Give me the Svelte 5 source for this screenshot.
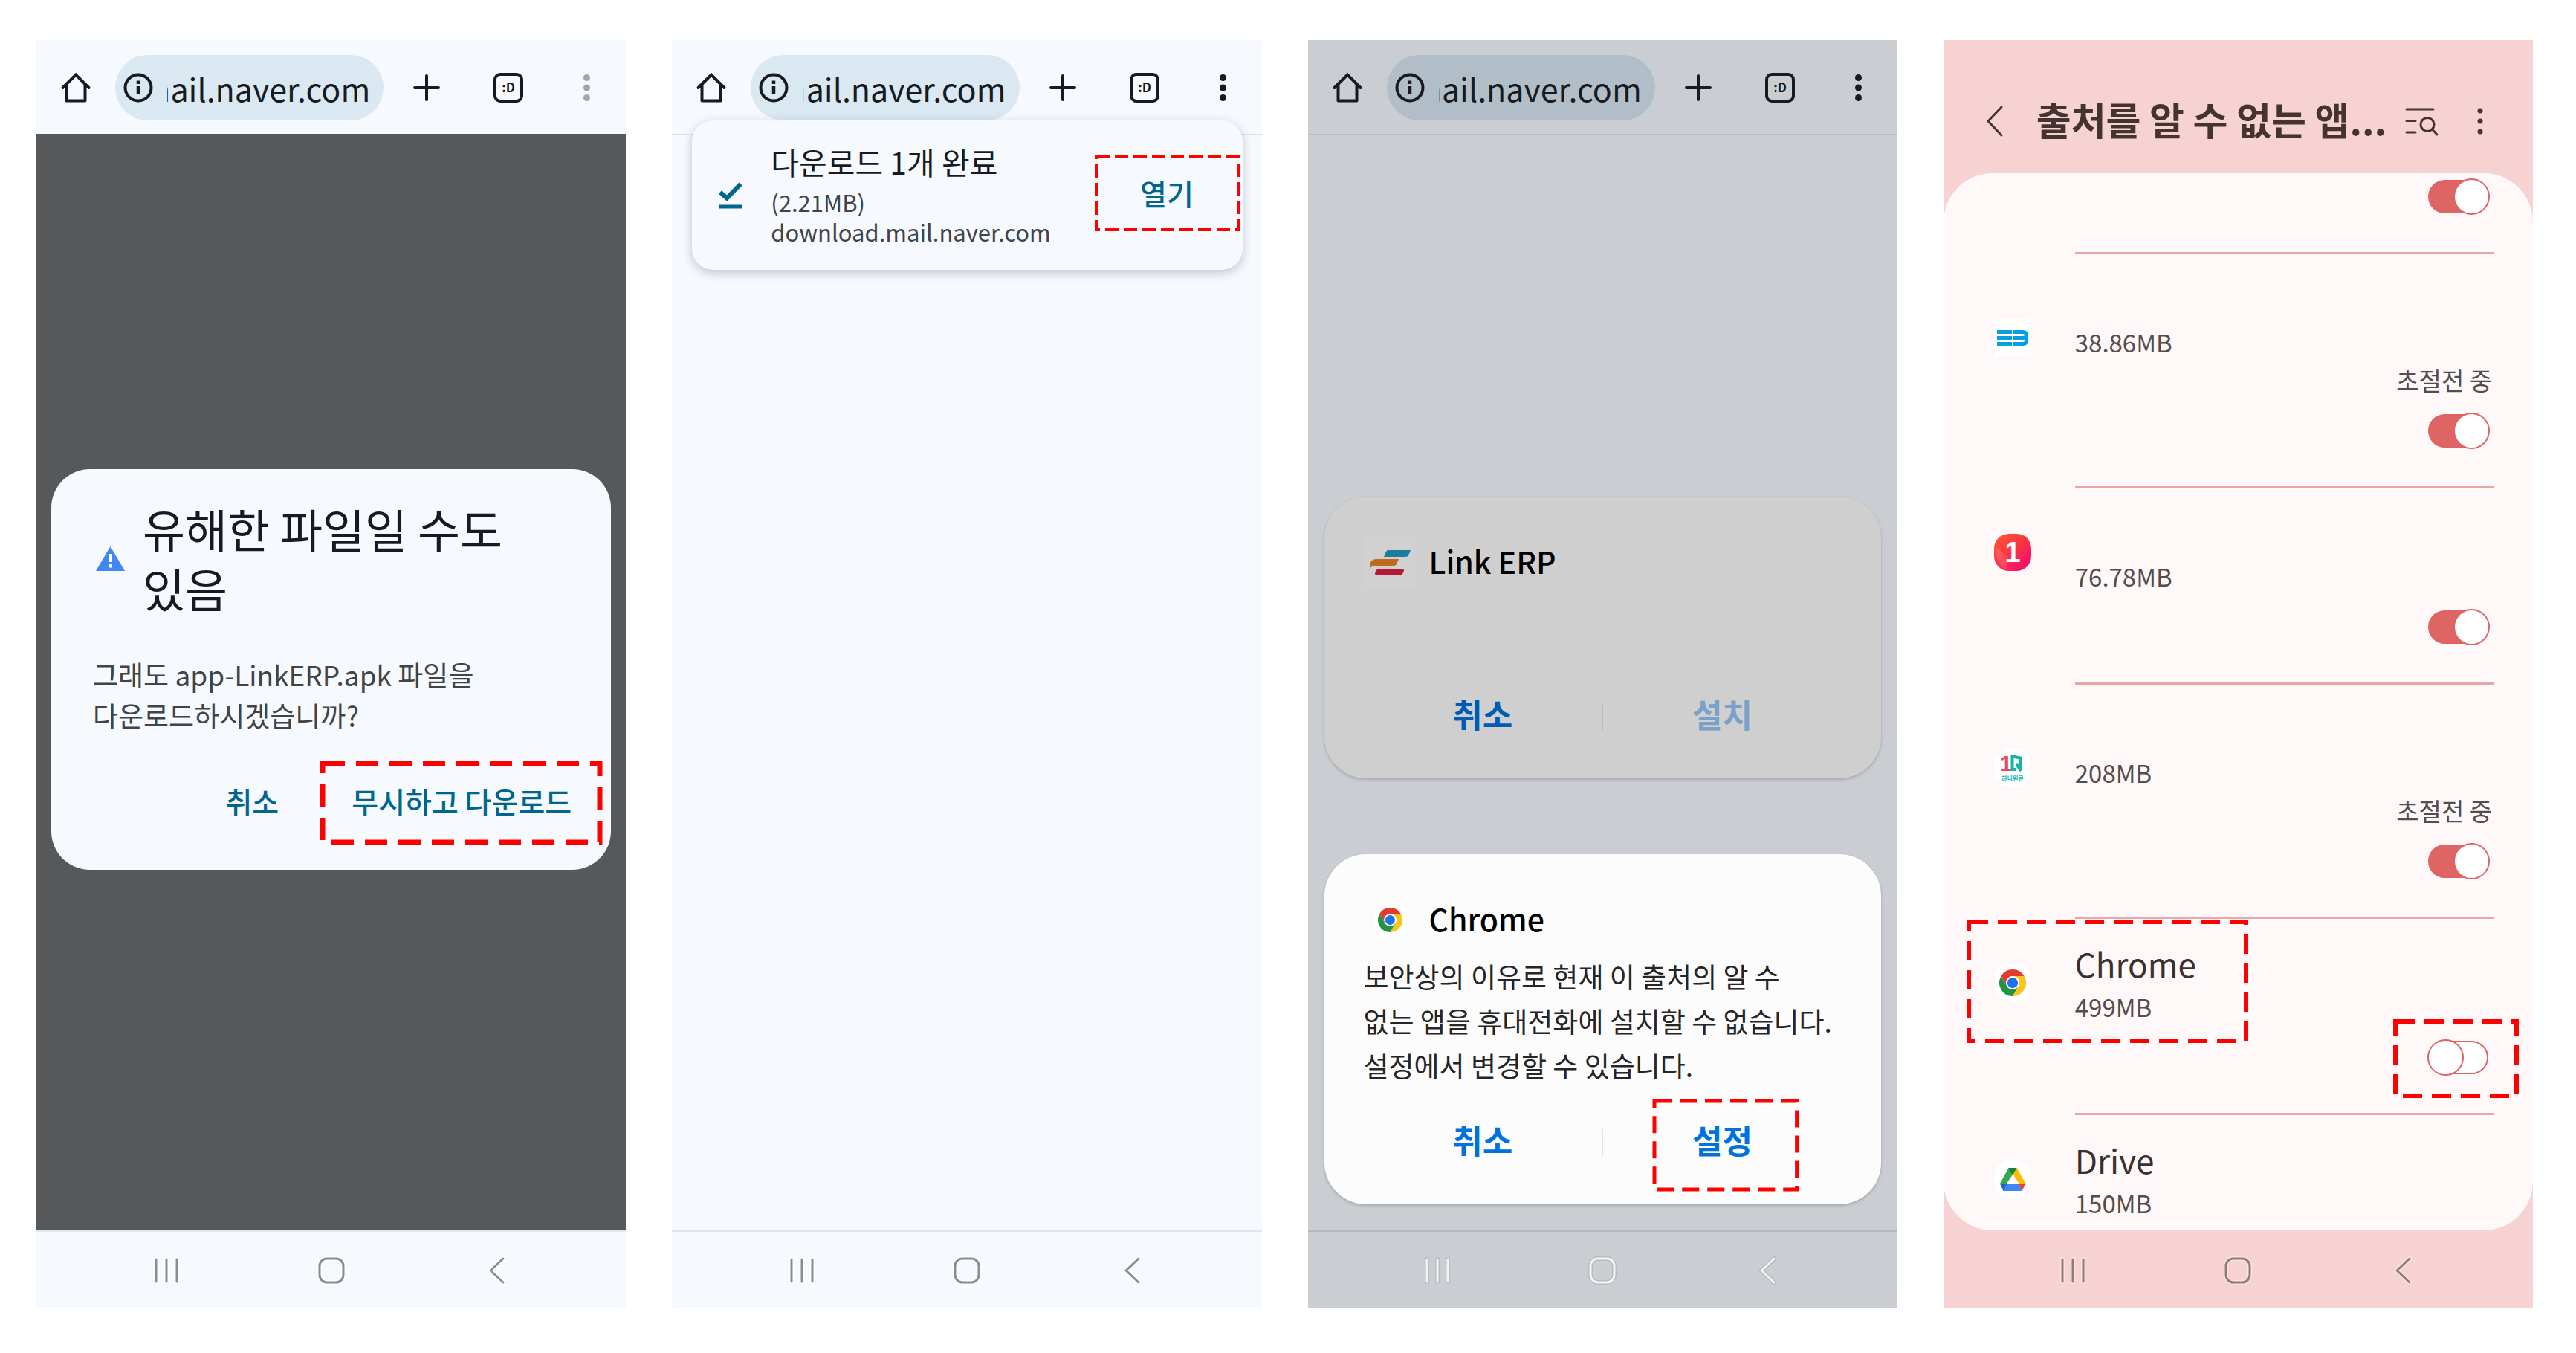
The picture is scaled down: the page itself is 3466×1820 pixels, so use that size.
<script lang="ts">
  const apps = [
    { id: 'first', name: '', size: '', icon: '', sleeping: false, allowed: true, partial: 'top' },
    { id: 'eb', name: '', size: '38.86MB', icon: 'eb', sleeping: true, allowed: true, partial: '' },
    { id: 'eleven', name: '', size: '76.78MB', icon: 'eleven', sleeping: false, allowed: true, partial: '' },
    { id: 'oneq', name: '', size: '208MB', icon: 'oneq', sleeping: true, allowed: true, partial: '' },
    { id: 'chrome', name: 'Chrome', size: '499MB', icon: 'chrome', sleeping: false, allowed: false, partial: '' },
    { id: 'drive', name: 'Drive', size: '150MB', icon: 'drive', sleeping: false, allowed: false, partial: 'bottom' },
  ];
</script>

{#snippet chromeLogo()}
  <circle cx="24" cy="24" r="12" fill="#fff" />
  <path fill="#e33b2e" d="M24,12H44.7812a23.9939,23.9939,0,0,0-41.5639.0029L13.6079,30l.0093-.0024A11.9852,11.9852,0,0,1,24,12Z" />
  <path fill="#fcc31e" d="M34.3913,30.0029,24.0007,48A23.994,23.994,0,0,0,44.78,12.0031H23.9989l-.0025.0093A11.985,11.985,0,0,1,34.3913,30.0029Z" />
  <path fill="#229342" d="M13.6086,30.0031,3.218,12.006A23.994,23.994,0,0,0,24.0025,48L34.3931,30.0029l-.0067-.0068a11.9852,11.9852,0,0,1-20.7778.007Z" />
  <circle cx="24" cy="24" r="9.5" fill="#1a73e8" />
{/snippet}

{#snippet mark(kind: string)}
  <svg class="mark {kind}" aria-hidden="true"><rect /></svg>
{/snippet}

{#snippet toolbar(id: string)}
  <header class="toolbar">
    <button class="icon-btn" aria-label="홈">
      <svg width="40" height="40" viewBox="0 0 40 40" fill="none" stroke="currentColor" stroke-width="4" stroke-linejoin="round" stroke-linecap="round">
        <path d="M2.500 20 L20 2.500 L37.500 20" stroke-linejoin="miter" />
        <path d="M7.500 16 V37.500 H32.500 V16" />
      </svg>
    </button>
    <div class="address">
      <svg width="40" height="40" viewBox="0 0 40 40" fill="none" stroke="currentColor" aria-hidden="true">
        <circle cx="20" cy="20" r="17.500" stroke-width="4" />
        <path d="M20 18 V29" stroke-width="4.500" />
        <path d="M20 10.500 V15" stroke-width="4.500" />
      </svg>
      <input id="url-{id}" aria-label="주소" value="mail.naver.com" dir="rtl" readonly />
    </div>
    <div class="tools">
      <button class="icon-btn" aria-label="새 탭">
        <svg width="40" height="40" viewBox="0 0 40 40" fill="none" stroke="currentColor" stroke-width="4" stroke-linecap="round"><path d="M4 20 H36 M20 4 V36" /></svg>
      </button>
      <button class="icon-btn" aria-label="탭">
        <svg width="40" height="40" viewBox="0 0 40 40">
          <rect x="2" y="2" width="36" height="36" rx="7" fill="none" stroke="currentColor" stroke-width="4" />
          <text x="20" y="26" class="tab-face">:D</text>
        </svg>
      </button>
      <button class="icon-btn more" aria-label="더보기">
        <svg width="31" height="40" viewBox="0 0 31 40" fill="currentColor">
          <circle cx="15.500" cy="6.500" r="4.500" /><circle cx="15.500" cy="20" r="4.500" /><circle cx="15.500" cy="33.500" r="4.500" />
        </svg>
      </button>
    </div>
  </header>
{/snippet}

{#snippet navbar()}
  <nav class="navbar">
    <button class="icon-btn" aria-label="최근 앱">
      <svg width="44" height="44" viewBox="0 0 44 44">
        <path class="halo" d="M8 7 V37 M22 7 V37 M36 7 V37" />
        <path class="line" d="M8 7 V37 M22 7 V37 M36 7 V37" />
      </svg>
    </button>
    <button class="icon-btn" aria-label="홈 화면">
      <svg width="44" height="44" viewBox="0 0 44 44">
        <rect class="halo" x="6" y="6" width="32" height="32" rx="10" />
        <rect class="line" x="6" y="6" width="32" height="32" rx="10" />
      </svg>
    </button>
    <button class="icon-btn" aria-label="뒤로">
      <svg width="44" height="44" viewBox="0 0 44 44">
        <path class="halo" d="M31 6 L14 22 L31 38" />
        <path class="line" d="M31 6 L14 22 L31 38" />
      </svg>
    </button>
  </nav>
{/snippet}

<main class="board">
  <section class="phone warning">
    {@render toolbar('warning')}
    <div class="screen">
      <div class="dialog" role="dialog" aria-labelledby="harm-title">
        <div class="dialog-head">
          <svg width="47" height="47" viewBox="0 0 47 47" aria-hidden="true">
            <path d="M23.500 7 L43 40 H4 Z" fill="#4285f4" />
            <path d="M23.500 17 V28 M23.500 31 V35.500" stroke="#fff" stroke-width="5" />
          </svg>
          <h2 id="harm-title">유해한 파일일 수도<br />있음</h2>
        </div>
        <p>그래도 app-LinkERP.apk 파일을<br />다운로드하시겠습니까?</p>
        <div class="dialog-actions">
          <button class="text-btn">취소</button>
          <button class="text-btn ignore">무시하고 다운로드{@render mark('m-ignore')}</button>
        </div>
      </div>
    </div>
    {@render navbar()}
  </section>

  <section class="phone done">
    {@render toolbar('done')}
    <div class="screen"></div>
    {@render navbar()}
    <div class="snack" role="status">
      <svg width="32" height="36" viewBox="0 0 32 36" fill="none" stroke="#00668b" aria-hidden="true">
        <path d="M2 13.500 L11 21.500 L29.500 2.500" stroke-width="6" />
        <path d="M0 33 H32" stroke-width="5" />
      </svg>
      <div class="snack-text">
        <strong>다운로드 1개 완료</strong>
        <span>(2.21MB)</span>
        <span>download.mail.naver.com</span>
      </div>
      <button class="text-btn open">열기{@render mark('m-open')}</button>
    </div>
  </section>

  <section class="phone install">
    {@render toolbar('install')}
    <div class="screen">
      <div class="card dim">
        <div class="card-head">
          <svg width="71" height="71" viewBox="0 0 71 71" aria-hidden="true">
            <rect width="71" height="71" fill="#d1d1d1" />
            <path fill="#1b7d9e" d="M33 19 H63 L60 26 Q59 28 56 28 H27 L30 21 Q31 19 33 19 Z" />
            <path fill="#bf6a1f" d="M16 31 H47 L44 38 Q43 40 40 40 H14 Q11 40 8 44 Q7 31 16 31 Z" />
            <path fill="#b31835" d="M20 44 H51 Q54 44 54 47 L51 53 H18 Q15 53 15 50 L17 46 Q18 44 20 44 Z" />
          </svg>
          <h2>Link ERP</h2>
        </div>
        <div class="card-gap"></div>
        <div class="card-actions">
          <button>취소</button>
          <i></i>
          <button disabled>설치</button>
        </div>
      </div>
      <div class="card">
        <div class="card-head">
          <svg width="71" height="71" viewBox="0 0 71 71" aria-hidden="true">
            <rect x="14" y="14" width="43" height="43" rx="16" fill="#fff" />
            <svg x="19" y="19" width="33" height="33" viewBox="0 0 48 48">{@render chromeLogo()}</svg>
          </svg>
          <h2>Chrome</h2>
        </div>
        <p>보안상의 이유로 현재 이 출처의 알 수<br />없는 앱을 휴대전화에 설치할 수 없습니다.<br />설정에서 변경할 수 있습니다.</p>
        <div class="card-actions">
          <button>취소</button>
          <i></i>
          <button>설정{@render mark('m-settings')}</button>
        </div>
      </div>
    </div>
    {@render navbar()}
  </section>

  <section class="phone sources">
    <header class="sources-head">
      <button class="icon-btn" aria-label="뒤로">
        <svg width="22" height="42" viewBox="0 0 22 42" fill="none" stroke="currentColor" stroke-width="3" stroke-linecap="round" stroke-linejoin="round"><path d="M20 2 L2 21 L20 40" /></svg>
      </button>
      <h1>출처를 알 수 없는 앱...</h1>
      <button class="icon-btn" aria-label="검색">
        <svg width="45" height="36" viewBox="0 0 45 36" fill="none" stroke="currentColor" stroke-width="3" stroke-linecap="round">
          <path d="M2 2 H38 M2 17.500 H14 M2 33 H14" />
          <circle cx="30" cy="22.500" r="9" /><path d="M36.500 29 L43 36" />
        </svg>
      </button>
      <button class="icon-btn" aria-label="더보기">
        <svg width="20" height="36" viewBox="0 0 20 36" fill="currentColor"><circle cx="10" cy="4" r="3.500" /><circle cx="10" cy="18" r="3.500" /><circle cx="10" cy="32" r="3.500" /></svg>
      </button>
    </header>
    <ul class="apps">
      {#each apps as app (app.id)}
        <li class={app.partial}>
          <div class="app-icon">
            {#if app.icon}
              <svg width="50" height="50" viewBox="0 0 50 50" aria-hidden="true">
                {#if app.icon === 'eb'}
                  <rect width="50" height="50" fill="#fff" />
                  <path d="M4 17.500 H24 M4 25.500 H24 M4 33.500 H24" stroke="#069fe0" stroke-width="5" />
                  <path d="M26 17.500 H39 Q43.500 17.500 43.500 21.500 Q43.500 25.500 39 25.500 H26 M26 33.500 H39 Q43.500 33.500 43.500 29.500 Q43.500 25.500 39 25.500" fill="none" stroke="#069fe0" stroke-width="5" />
                {:else if app.icon === 'eleven'}
                  <defs>
                    <linearGradient id="eleven-fill" x1="0" y1="0" x2="1" y2="1">
                      <stop offset="0" stop-color="#ff5a2d" /><stop offset=".5" stop-color="#fa3248" /><stop offset="1" stop-color="#f5007d" />
                    </linearGradient>
                  </defs>
                  <rect width="50" height="50" rx="20" fill="url(#eleven-fill)" />
                  <path d="M3 18 L17 30 V48 Q2 44 3 18 Z" fill="#fff" opacity=".12" />
                  <path d="M48 13 L31 22 V0 Q46 0 48 13 Z" fill="#ff3a2d" opacity=".3" />
                  <text x="25" y="38" class="eleven">1</text>
                {:else}
                  <rect x="1" width="48" height="50" rx="19" fill="#fff" />
                  {#if app.icon === 'oneq'}
                    <text x="16" y="29" class="oneq">1</text>
                    <path d="M24.500 9.500 L35 11.500 V28 M24.500 8 V27 H30 M30 20 L36.500 29" fill="none" stroke="#12b5a6" stroke-width="4" />
                    <text x="25" y="42" class="oneq-name">하나원큐</text>
                  {:else if app.icon === 'chrome'}
                    <svg x="7" y="7" width="36" height="36" viewBox="0 0 48 48">{@render chromeLogo()}</svg>
                  {:else}
                    <path fill="#34a853" d="M19.500 10 L8 31 L12 38 L25 19 L25 10 Z" />
                    <path fill="#fbbc04" d="M20 10 H30.500 L42.500 31 H33.500 Z" />
                    <path fill="#188038" d="M19.500 10 H30.500 L25 19.500 Z" />
                    <path fill="#4285f4" d="M12 41 L18 31 H33 L38 41 Z" />
                    <path fill="#1967d2" d="M8 31 H18 L12.500 41 Z" />
                    <path fill="#ea4335" d="M33 31 H42.500 L37.500 41 Z" />
                    <path fill="#fff" d="M25 20 L31.500 31 H18.500 Z" />
                  {/if}
                {/if}
              </svg>
            {/if}
          </div>
          <div class="app-body">
            {#if !app.partial || app.name}
              <div class="app-name">{app.name}</div>
              <div class="app-size">{app.size}</div>
            {/if}
            {#if app.sleeping}<div class="app-sleep">초절전 중</div>{/if}
            {#if app.partial !== 'bottom'}
              <label class="switch">
                <input type="checkbox" role="switch" checked={app.allowed} aria-label="{app.name || app.size} 권한 허용" />
                {#if app.icon === 'chrome'}{@render mark('m-switch')}{/if}
              </label>
            {/if}
          </div>
          {#if app.icon === 'chrome'}{@render mark('m-app')}{/if}
        </li>
      {/each}
    </ul>
    {@render navbar()}
  </section>
</main>

<style>
  :global(body) {
    margin: 0;
    background: #fff;
  }
  * {
    box-sizing: border-box;
  }
  .board {
    display: flex;
    gap: 62px;
    min-height: 100vh;
    padding: 54px 58px 60px 49px;
    font-family: 'Noto Sans CJK KR', 'Noto Sans', sans-serif;
  }
  h1, h2, p, ul {
    margin: 0;
    padding: 0;
  }
  button, input {
    border: 0;
    margin: 0;
    padding: 0;
    background: none;
    font: inherit;
    color: inherit;
  }
  svg {
    display: block;
    flex: none;
    overflow: visible;
  }
  .phone {
    position: relative;
    display: flex;
    flex-direction: column;
    flex: 1 1 0;
    min-width: 0;
    background: #f6f9fe;
    color: #171b1f;
  }
  .screen {
    flex: 1;
    display: flex;
    flex-direction: column;
  }
  .icon-btn {
    flex: none;
  }

  .toolbar {
    display: flex;
    align-items: center;
    height: 128px;
    padding: 2px 37px 0 33px;
    border-bottom: 2px solid #dae3e6;
  }
  .address {
    flex: 1;
    min-width: 0;
    display: flex;
    align-items: center;
    gap: 19px;
    height: 88px;
    margin: 0 38px 0 33px;
    padding: 0 18px 0 11px;
    border-radius: 44px;
    background: #dae8f1;
  }
  .address input {
    flex: 1;
    min-width: 0;
    height: 64px;
    font-size: 43px;
    line-height: 64px;
    outline: 0;
  }
  .tools {
    display: flex;
    gap: 70px;
  }
  .tab-face {
    font-size: 17px;
    font-weight: 700;
    text-anchor: middle;
    fill: currentColor;
  }

  .navbar {
    display: grid;
    grid-template-columns: repeat(3, 222px);
    justify-content: center;
    align-items: center;
    height: 105px;
    padding-top: 1px;
    border-top: 2px solid #dfe6ee;
  }
  .navbar .icon-btn {
    justify-self: center;
  }
  .navbar .line, .navbar .halo {
    fill: none;
    stroke-linecap: round;
    stroke-linejoin: round;
  }
  .navbar .line {
    stroke: #8b8c90;
    stroke-width: 3;
  }
  .navbar .halo {
    stroke: #fcfdff;
    stroke-width: 6;
  }

  .mark {
    position: absolute;
    inset: 0;
    width: 100%;
    height: 100%;
    overflow: visible;
    pointer-events: none;
  }
  .mark rect {
    width: 100%;
    height: 100%;
    fill: none;
    stroke: #f00;
    stroke-width: 6px;
    stroke-dasharray: 26 13;
  }
  .m-ignore {
    inset: 3px;
    width: calc(100% - 7px);
    height: calc(100% - 7px);
  }
  .m-ignore rect {
    stroke-width: 7px;
    stroke-dasharray: 30 15;
  }
  .m-open {
    inset: -1px 2px;
    width: calc(100% - 4px);
    height: calc(100% - 4px);
  }
  .m-open rect {
    stroke-width: 4px;
    stroke-dasharray: 18 7;
  }
  .m-settings {
    inset: 7px 60px 0 69px;
    width: calc(100% - 129px);
    height: calc(100% - 7px);
  }
  .m-settings rect {
    stroke-width: 5px;
    stroke-dasharray: 23 11;
  }
  .m-app {
    inset: 4px auto auto 34px;
    width: 373px;
    height: 160px;
  }
  .m-switch {
    inset: -24px auto auto -44px;
    width: 163px;
    height: 100px;
  }

  .text-btn {
    position: relative;
    padding-bottom: 8px;
    font-size: 39px;
    font-weight: 500;
    color: #00668b;
  }

  .warning .toolbar {
    border-color: #57585a;
  }
  .warning .more {
    color: #a2a5a8;
  }
  .warning .screen {
    justify-content: center;
    padding: 0 20px 36px;
    background: #57585a;
  }
  .dialog {
    padding: 40px 11px 33px 56px;
    border-radius: 52px;
    background: #f6f9fe;
  }
  .dialog-head {
    display: flex;
    align-items: center;
    gap: 20px;
  }
  .dialog h2 {
    font-size: 62px;
    font-weight: 400;
    line-height: 80px;
  }
  .dialog p {
    margin: 49px 0 34px;
    font-size: 37px;
    line-height: 55px;
    color: #3f4448;
  }
  .dialog-actions {
    display: flex;
    justify-content: flex-end;
    gap: 56px;
  }
  .ignore {
    width: 380px;
    height: 113px;
  }

  .snack {
    position: absolute;
    top: 108px;
    left: 27px;
    right: 26px;
    display: flex;
    align-items: center;
    padding: 0 4px 0 36px;
    border-radius: 28px;
    background: #f6f9fe;
    box-shadow: 0 4px 14px rgba(40, 50, 60, 0.26);
  }
  .snack-text {
    flex: 1;
    display: flex;
    flex-direction: column;
    padding: 30px 0 31px 38px;
    font-size: 31px;
    line-height: 40px;
    color: #3f4448;
  }
  .snack strong {
    margin-bottom: 10px;
    font-size: 41px;
    font-weight: 400;
    line-height: 50px;
    color: #171b1f;
  }
  .open {
    width: 195px;
    height: 102px;
  }

  .install {
    background: #cacdd2;
  }
  .install .toolbar, .install .navbar {
    border-color: #b4b9be;
  }
  .install .address {
    background: #b1bec7;
  }
  .install .navbar .line {
    stroke: #f3f4f5;
  }
  .install .navbar .halo {
    stroke: #b9bbc0;
  }
  .install .screen {
    justify-content: flex-end;
    gap: 102px;
    padding: 0 22px 35px;
  }
  .card {
    padding: 53px 53px 20px;
    border-radius: 56px;
    background: #fcfcfc;
    box-shadow: 0 2px 4px rgba(0, 0, 0, 0.18);
    color: #000;
  }
  .card-head {
    display: flex;
    align-items: center;
    gap: 17px;
  }
  .card h2 {
    padding-bottom: 6px;
    font-size: 41px;
    font-weight: 500;
    line-height: 60px;
  }
  .card p {
    margin: 10px 0 11px;
    font-size: 37px;
    line-height: 60px;
    white-space: nowrap;
    color: #252525;
  }
  .card-gap {
    height: 109px;
  }
  .card-actions {
    display: grid;
    grid-template-columns: 1fr 2px 1fr;
    align-items: center;
    height: 126px;
  }
  .card-actions button {
    position: relative;
    height: 126px;
    padding-bottom: 8px;
    font-size: 44px;
    font-weight: 700;
    color: #0072de;
  }
  .card-actions i {
    height: 36px;
    background: #e3e3e3;
  }
  .dim {
    background: #cfcfcf;
  }
  .dim .card-actions button {
    color: #005bb5;
  }
  .dim .card-actions button:disabled {
    color: #7ba1c8;
  }
  .dim .card-actions i {
    background: #b9b9b9;
  }

  .sources {
    background: #f6d2d2;
    color: #453331;
  }
  .sources-head {
    display: flex;
    align-items: center;
    height: 179px;
    padding: 39px 61px 0 58px;
  }
  .sources-head h1 {
    flex: 1;
    padding: 0 0 6px 45px;
    font-size: 51px;
    font-weight: 700;
    line-height: 70px;
    white-space: nowrap;
  }
  .sources-head .icon-btn:last-child {
    margin-left: 46px;
  }
  .sources .navbar {
    border-color: transparent;
  }
  .sources .navbar .line {
    stroke: #8f7b79;
  }
  .sources .navbar .halo {
    stroke: #fae3e2;
  }
  .apps {
    flex: 1;
    list-style: none;
    border-radius: 66px;
    background: #fef8f8;
  }
  .apps li {
    position: relative;
    display: grid;
    grid-template-columns: 177px 1fr;
    padding-right: 53px;
  }
  .app-icon {
    display: flex;
    align-items: center;
    padding: 0 0 92px 68px;
  }
  .app-body {
    display: flex;
    flex-direction: column;
    padding: 28px 0 50px;
    border-bottom: 3px solid #eba5a6;
  }
  .top .app-body {
    padding-top: 0;
  }
  .top .switch {
    margin-top: 7px;
  }
  .bottom .app-body {
    border: 0;
    padding-bottom: 0;
  }
  .bottom .app-icon {
    align-items: flex-start;
    padding: 61px 0 0 68px;
  }
  .app-name {
    height: 64px;
    font-size: 44px;
    line-height: 64px;
    color: #3d2f2e;
  }
  .app-size {
    height: 52px;
    font-size: 33px;
    line-height: 52px;
    color: #554d4c;
  }
  .app-sleep {
    padding-right: 2px;
    font-size: 33px;
    line-height: 51px;
    text-align: right;
    color: #554d4c;
  }
  .switch {
    position: relative;
    align-self: flex-end;
    width: 83px;
    margin: 18px 5px 0 0;
    padding: 2px 0;
  }
  .switch input {
    appearance: none;
    position: relative;
    display: block;
    width: 81px;
    height: 45px;
    border: 2px solid #dc6464;
    border-radius: 23px;
    background: #fff;
  }
  .switch input::before {
    content: '';
    position: absolute;
    top: -4px;
    left: -3px;
    width: 49px;
    height: 49px;
    border: 2px solid #dc6464;
    border-radius: 50%;
    background: #fff;
    box-sizing: border-box;
  }
  .switch input:checked {
    background: #df6565;
  }
  .switch input:checked::before {
    left: 32px;
  }

  .eleven {
    font-family: 'Liberation Sans', sans-serif;
    font-size: 38px;
    font-weight: 700;
    text-anchor: middle;
    fill: #fff;
  }
  .oneq {
    font-family: 'Liberation Sans', sans-serif;
    font-size: 30px;
    font-weight: 700;
    text-anchor: middle;
    fill: #f04464;
  }
  .oneq-name {
    font-size: 8px;
    font-weight: 700;
    text-anchor: middle;
    fill: #12b5a6;
  }
</style>
